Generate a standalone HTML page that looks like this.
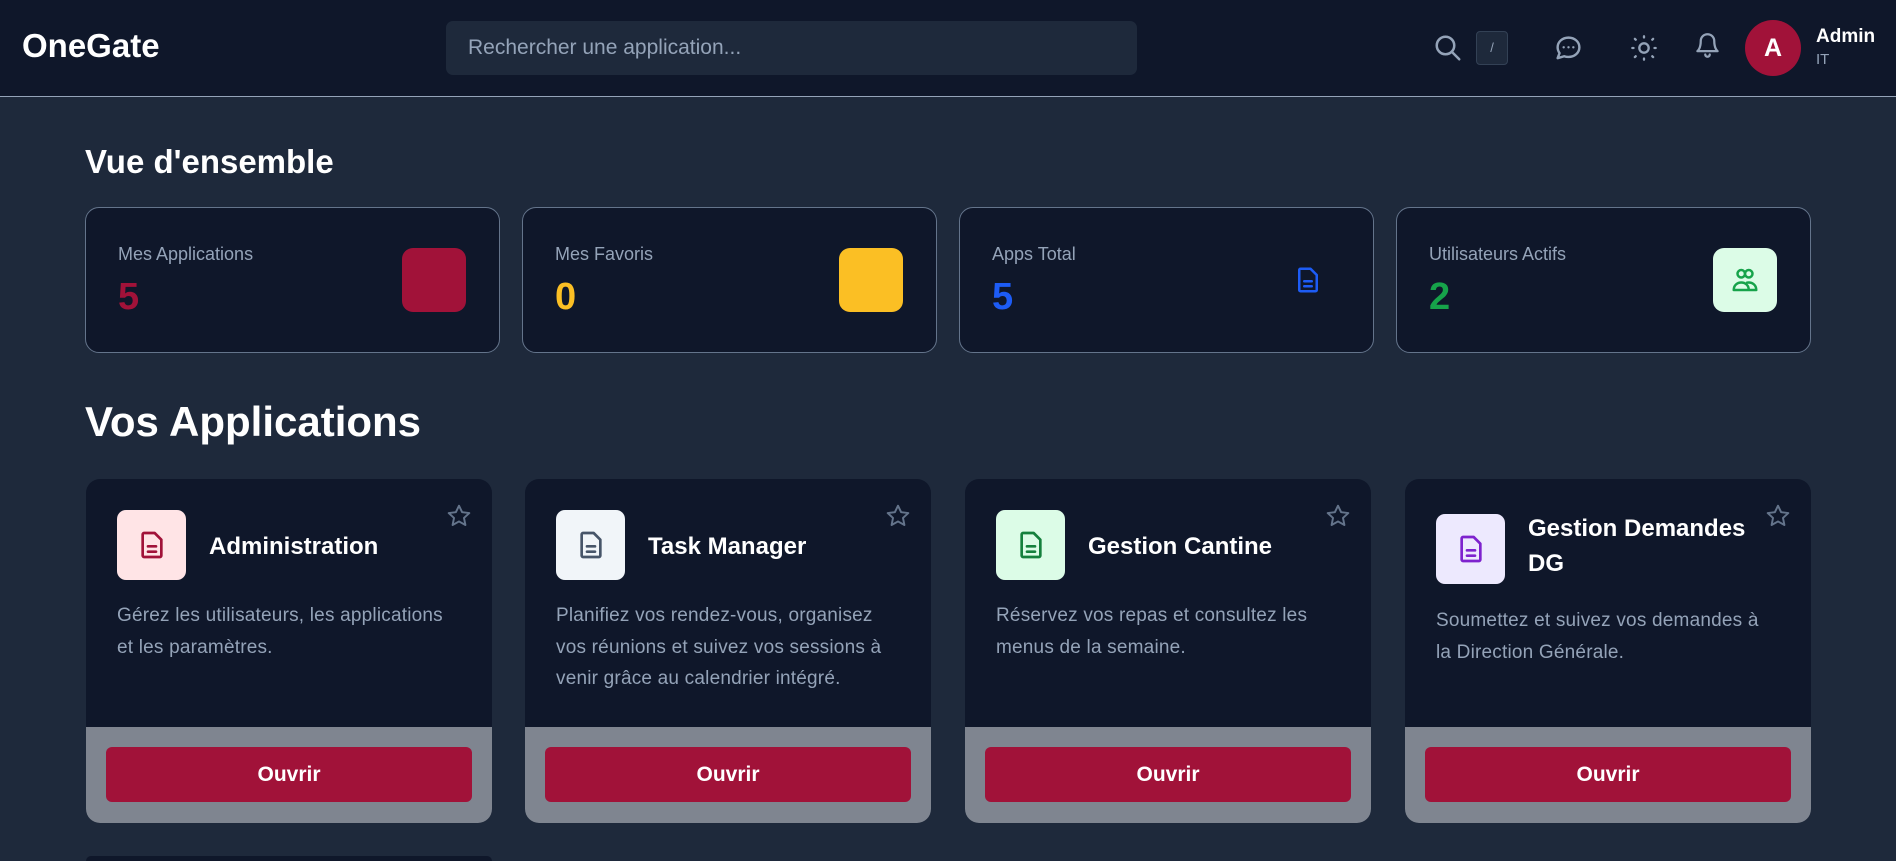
<!DOCTYPE html>
<html style="overflow:hidden;height:861px"><head><meta charset="utf-8"><style>
*{box-sizing:border-box;margin:0;padding:0}
body{width:1896px;height:861px;overflow:hidden;background:#1e293b;font-family:"Liberation Sans",sans-serif;position:relative;color:#fff}
.hdr{position:absolute;left:0;top:0;width:1896px;height:97px;background:#0f172a;border-bottom:1px solid #94a3b8}
.abs{position:absolute}
.logo{left:22px;top:27px;font-size:33px;font-weight:bold}
.search{left:446px;top:21px;width:691px;height:54px;background:#1e293b;border-radius:7px;color:#94a3b8;font-size:21px;padding:15px 22px}
.kbd{left:1476px;top:31px;width:32px;height:34px;background:#1e293b;border:1px solid #334155;border-radius:4px;color:#94a3b8;font-size:13px;text-align:center;line-height:32px}
.av{left:1745px;top:20px;width:56px;height:56px;border-radius:50%;background:#a11239;font-size:25px;font-weight:bold;text-align:center;line-height:56px}
h2{position:absolute;font-weight:bold}
.stat{position:absolute;top:207px;width:415px;height:146px;background:#0f172a;border:1px solid #64748b;border-radius:14px}
.stat .l{position:absolute;left:32px;top:36px;font-size:18px;color:#94a3b8}
.stat .n{position:absolute;left:32px;top:68px;font-size:38px;font-weight:bold}
.stat .b{position:absolute;left:316px;top:40px;width:64px;height:64px;border-radius:11px;display:flex;align-items:center;justify-content:center}
.card{position:absolute;top:479px;width:406px;height:344px;background:#0f172a;border-radius:14px;overflow:hidden}
.card .ib{position:absolute;left:31px;top:31px;width:69px;height:70px;border-radius:9px;display:flex;align-items:center;justify-content:center}
.card .t{position:absolute;left:123px;top:50px;font-size:24px;font-weight:bold;line-height:35px;width:240px}
.card .st{position:absolute;right:20px;top:24px}
.card .d{position:absolute;left:31px;top:121px;width:342px;font-size:19px;letter-spacing:0.2px;line-height:31.5px;color:#94a3b8}
.card .f{position:absolute;left:0;top:248px;width:406px;height:96px;background:#7f8590}
.card .btn{position:absolute;left:20px;top:20px;width:366px;height:55px;background:#a11239;border-radius:6px;text-align:center;line-height:55px;font-size:21px;font-weight:bold}
</style></head><body>
<div class="hdr">
<div class="abs logo">OneGate</div>
<div class="abs search">Rechercher une application...</div>
<svg class="abs" style="left:1433px;top:33px" width="30" height="30" viewBox="0 0 24 24" fill="none" stroke="#94a3b8" stroke-width="2" stroke-linecap="round"><circle cx="10" cy="10" r="7"/><path d="M15 15l6 6"/></svg>
<div class="abs kbd">/</div>
<svg class="abs" style="left:1554px;top:34px" width="29" height="29" viewBox="0 0 24 24" fill="none" stroke="#94a3b8" stroke-width="2" stroke-linecap="round" stroke-linejoin="round"><path d="M12 3c5 0 9 3.4 9 8s-4 8-9 8c-1.3 0-2.5-.2-3.6-.6L3 20l1.6-4.2C3.6 14.5 3 12.8 3 11c0-4.6 4-8 9-8z"/><path d="M8 11h.01M12 11h.01M16 11h.01"/></svg>
<svg class="abs" style="left:1630px;top:34px" width="28" height="28" viewBox="0 0 24 24" fill="none" stroke="#94a3b8" stroke-width="2" stroke-linecap="round"><circle cx="12" cy="12" r="4"/><path d="M12 2v1M12 21v1M4.2 4.2l.7.7M19.1 19.1l.7.7M2 12h1M21 12h1M4.2 19.8l.7-.7M19.1 4.9l.7-.7"/></svg>
<svg class="abs" style="left:1694px;top:32px" width="27" height="27" viewBox="0 0 24 24" fill="none" stroke="#94a3b8" stroke-width="2" stroke-linecap="round" stroke-linejoin="round"><path d="M6 8a6 6 0 0 1 12 0c0 7 3 9 3 9H3s3-2 3-9"/><path d="M10 20a2 2 0 0 0 4 0"/></svg>
<div class="abs av">A</div>
<div class="abs" style="left:1816px;top:26px;font-size:19px;font-weight:bold">Admin</div>
<div class="abs" style="left:1816px;top:51px;font-size:15px;color:#94a3b8">IT</div>
</div>

<h2 style="left:85px;top:143px;font-size:33px">Vue d'ensemble</h2>

<div class="stat" style="left:85px"><div class="l">Mes Applications</div><div class="n" style="color:#a11239">5</div><div class="b" style="background:#a11239"></div></div>
<div class="stat" style="left:522px"><div class="l">Mes Favoris</div><div class="n" style="color:#fbbf24">0</div><div class="b" style="background:#fbbf24"></div></div>
<div class="stat" style="left:959px"><div class="l">Apps Total</div><div class="n" style="color:#1d5cf5">5</div><div class="b"><svg width="30" height="30" viewBox="0 0 24 24" fill="none" stroke="#1d5cf5" stroke-width="2" stroke-linejoin="round" stroke-linecap="round"><path d="M6 3h8l5 5v12a1 1 0 0 1-1 1H6a1 1 0 0 1-1-1V4a1 1 0 0 1 1-1z"/><path d="M9 13h6M9 17h6"/></svg></div></div>
<div class="stat" style="left:1396px"><div class="l">Utilisateurs Actifs</div><div class="n" style="color:#16a34a">2</div><div class="b" style="background:#dcfce7"><svg width="30" height="30" viewBox="0 0 24 24" fill="none" stroke="#16a34a" stroke-width="2" stroke-linejoin="round"><circle cx="9" cy="7" r="3"/><circle cx="15" cy="7" r="3"/><path d="M3 20c0-4 3-6 6-6s6 2 6 6zM13 14.3c.6-.2 1.3-.3 2-.3 3 0 6 2 6 6h-6"/></svg></div></div>

<h2 style="left:85px;top:398px;font-size:42px">Vos Applications</h2>

<div class="card" style="left:86px">
<div class="ib" style="background:#ffe4e6"><svg width="32" height="32" viewBox="0 0 24 24" fill="none" stroke="#a11239" stroke-width="2" stroke-linejoin="round" stroke-linecap="round"><path d="M6 3h8l5 5v12a1 1 0 0 1-1 1H6a1 1 0 0 1-1-1V4a1 1 0 0 1 1-1z"/><path d="M9 13h6M9 17h6"/></svg></div>
<div class="t">Administration</div>
<svg class="st" width="26" height="26" viewBox="0 0 24 24" fill="none" stroke="#64748b" stroke-width="1.8" stroke-linejoin="round"><path d="M12 2.5l2.9 6 6.6.8-4.9 4.5 1.3 6.5L12 17l-5.9 3.3 1.3-6.5-4.9-4.5 6.6-.8z"/></svg>
<div class="d">Gérez les utilisateurs, les applications<br>et les paramètres.</div>
<div class="f"><div class="btn">Ouvrir</div></div>
</div>

<div class="card" style="left:525px">
<div class="ib" style="background:#f1f5f9"><svg width="32" height="32" viewBox="0 0 24 24" fill="none" stroke="#475569" stroke-width="2" stroke-linejoin="round" stroke-linecap="round"><path d="M6 3h8l5 5v12a1 1 0 0 1-1 1H6a1 1 0 0 1-1-1V4a1 1 0 0 1 1-1z"/><path d="M9 13h6M9 17h6"/></svg></div>
<div class="t">Task Manager</div>
<svg class="st" width="26" height="26" viewBox="0 0 24 24" fill="none" stroke="#64748b" stroke-width="1.8" stroke-linejoin="round"><path d="M12 2.5l2.9 6 6.6.8-4.9 4.5 1.3 6.5L12 17l-5.9 3.3 1.3-6.5-4.9-4.5 6.6-.8z"/></svg>
<div class="d">Planifiez vos rendez-vous, organisez<br>vos réunions et suivez vos sessions à<br>venir grâce au calendrier intégré.</div>
<div class="f"><div class="btn">Ouvrir</div></div>
</div>

<div class="card" style="left:965px">
<div class="ib" style="background:#dcfce7"><svg width="32" height="32" viewBox="0 0 24 24" fill="none" stroke="#15803d" stroke-width="2" stroke-linejoin="round" stroke-linecap="round"><path d="M6 3h8l5 5v12a1 1 0 0 1-1 1H6a1 1 0 0 1-1-1V4a1 1 0 0 1 1-1z"/><path d="M9 13h6M9 17h6"/></svg></div>
<div class="t">Gestion Cantine</div>
<svg class="st" width="26" height="26" viewBox="0 0 24 24" fill="none" stroke="#64748b" stroke-width="1.8" stroke-linejoin="round"><path d="M12 2.5l2.9 6 6.6.8-4.9 4.5 1.3 6.5L12 17l-5.9 3.3 1.3-6.5-4.9-4.5 6.6-.8z"/></svg>
<div class="d">Réservez vos repas et consultez les<br>menus de la semaine.</div>
<div class="f"><div class="btn">Ouvrir</div></div>
</div>

<div class="card" style="left:1405px">
<div class="ib" style="background:#ede9fe;top:35px"><svg width="32" height="32" viewBox="0 0 24 24" fill="none" stroke="#7e22ce" stroke-width="2" stroke-linejoin="round" stroke-linecap="round"><path d="M6 3h8l5 5v12a1 1 0 0 1-1 1H6a1 1 0 0 1-1-1V4a1 1 0 0 1 1-1z"/><path d="M9 13h6M9 17h6"/></svg></div>
<div class="t" style="top:32px">Gestion Demandes DG</div>
<svg class="st" width="26" height="26" viewBox="0 0 24 24" fill="none" stroke="#64748b" stroke-width="1.8" stroke-linejoin="round"><path d="M12 2.5l2.9 6 6.6.8-4.9 4.5 1.3 6.5L12 17l-5.9 3.3 1.3-6.5-4.9-4.5 6.6-.8z"/></svg>
<div class="d" style="top:126px">Soumettez et suivez vos demandes à<br>la Direction Générale.</div>
<div class="f"><div class="btn">Ouvrir</div></div>
</div>

<div class="abs" style="left:86px;top:856px;width:406px;height:5px;background:#0f172a;border-radius:8px 8px 0 0"></div>
</body></html>
